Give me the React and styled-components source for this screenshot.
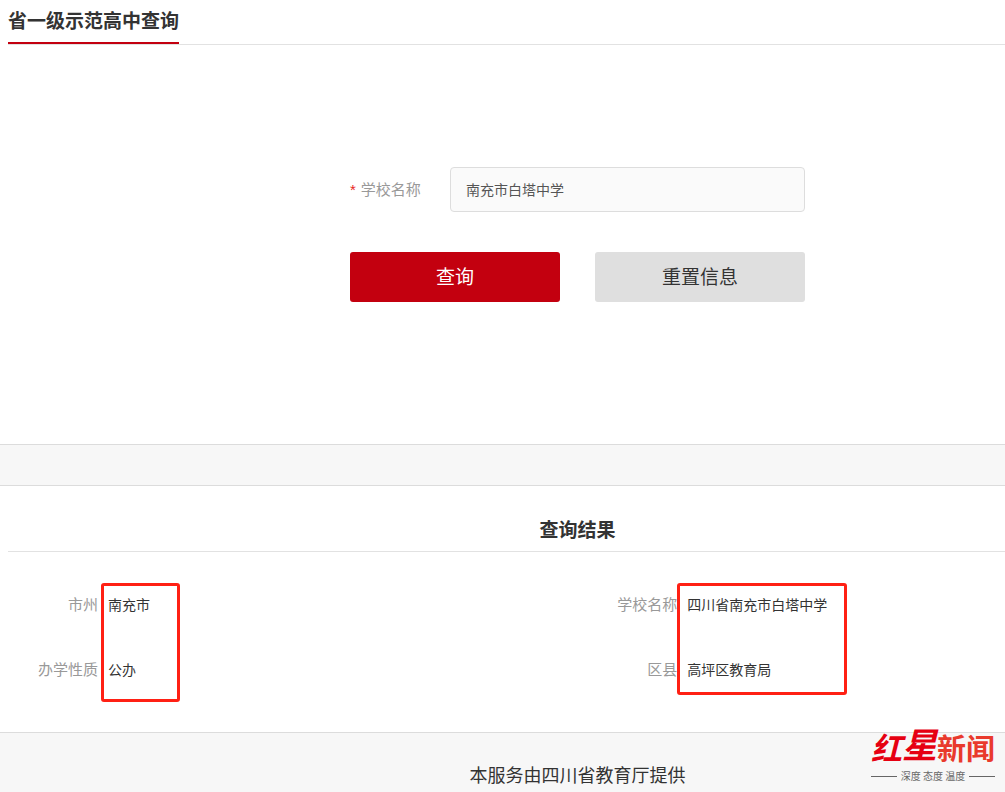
import React, { useState } from "react";
import styled, { createGlobalStyle } from "styled-components";

const GlobalStyle = createGlobalStyle`
  * { box-sizing: border-box; }
  body {
    margin: 0;
    background: #fff;
    color: #333;
    font-family: "Noto Sans CJK SC", sans-serif;
    font-size: 14px;
  }
  h1, h2, dl, dd, p { margin: 0; }
  button, input { font-family: inherit; }
`;

const Page = styled.div`
  display: flex;
  flex-direction: column;
  min-height: 100vh;
  overflow-x: hidden;
`;

const TitleBar = styled.header`
  display: flex;
  height: 45px;
  margin-left: 8px;
  border-bottom: 1px solid #e2e2e2;
`;

const Title = styled.h1`
  height: 44px;
  border-bottom: 2px solid #c3000f;
  font-size: 19px;
  line-height: 40px;
`;

const QueryForm = styled.form`
  display: flex;
  flex-direction: column;
  align-items: center;
  gap: 40px;
  padding: 122px 0 142px 150px;
`;

const FormRow = styled.div`
  display: flex;
  align-items: center;
  justify-content: space-between;
  width: 100%;
  max-width: 455px;
`;

const FieldLabel = styled.label`
  padding-bottom: 2px;
  color: #999;
  font-size: 15px;
`;

const Required = styled.span`
  margin-right: 5px;
  color: #e8261c;
  font-family: "Liberation Sans", sans-serif;
`;

const TextField = styled.input`
  width: 355px;
  height: 45px;
  padding: 0 15px 2px;
  border: 1px solid #ddd;
  border-radius: 4px;
  outline: none;
  background: #fafafa;
  color: #555;
  font-size: 14px;
`;

const Button = styled.button`
  width: 210px;
  height: 50px;
  padding: 0 0 3px;
  border: 0;
  border-radius: 3px;
  background: ${({ $primary }) => ($primary ? "#c3000f" : "#dfdfdf")};
  color: ${({ $primary }) => ($primary ? "#fff" : "#333")};
  font-size: 19px;
  cursor: pointer;
`;

const Divider = styled.div`
  height: 42px;
  border: solid #dcdcdc;
  border-width: 1px 0;
  background: #f7f7f7;
`;

const Results = styled.section`
  flex: 1;
  padding-left: 8px;
`;

const ResultsTitle = styled.h2`
  height: 66px;
  padding: 23px 0 0 142px;
  border-bottom: 1px solid #e2e2e2;
  font-size: 19px;
  line-height: 40px;
  text-align: center;
`;

const ResultColumns = styled.div`
  display: grid;
  grid-template-columns: 57fr 43fr;
  padding: 21px 0 29px;
`;

const ResultList = styled.dl`
  position: relative;
`;

const ResultRow = styled.div`
  display: grid;
  grid-template-columns: ${({ $labelWidth }) => $labelWidth}px 1fr;
  column-gap: 10px;
  height: 65px;
  line-height: 62px;
`;

const ResultLabel = styled.dt`
  color: #999;
  font-size: 15px;
  text-align: right;
`;

const ResultValue = styled.dd`
  font-size: 14px;
`;

const Highlight = styled.div`
  position: absolute;
  top: 10px;
  left: ${({ $left }) => $left}px;
  width: ${({ $width }) => $width}px;
  height: ${({ $height }) => $height}px;
  border: 3px solid #ff2014;
  border-radius: 3px;
  pointer-events: none;
`;

const Footer = styled.footer`
  position: relative;
  height: 60px;
  padding: 21px 0 0 150px;
  border-top: 1px solid #dcdcdc;
  background: #f7f7f7;
  font-size: 18px;
  line-height: 40px;
  text-align: center;
`;

const Watermark = styled.div`
  position: absolute;
  top: -9px;
  right: 10px;
  width: 124px;
`;

const Brand = styled.div`
  display: flex;
  align-items: center;
  justify-content: space-between;
  height: 45px;
  white-space: nowrap;
`;

const BrandScript = styled.span`
  display: flex;
  align-items: center;
  color: #e60012;
  font-size: 31px;
  font-style: italic;
  font-weight: 700;
`;

const BrandStar = styled.span`
  padding-bottom: 8px;
  font-size: 35px;
`;

const BrandName = styled.span`
  color: #e93a2c;
  font-size: 29px;
  font-weight: 700;
`;

const Tagline = styled.div`
  display: flex;
  align-items: center;
  gap: 4px;
  color: #666;
  font-size: 10px;
  line-height: 14px;
  white-space: nowrap;

  &::before,
  &::after {
    content: "";
    flex: 1;
    height: 1px;
    background: #666;
  }
`;

const resultGroups = [
  {
    labelWidth: 90,
    box: { left: 93, width: 79, height: 119 },
    rows: [["市州", "南充市"], ["办学性质", "公办"]],
  },
  {
    labelWidth: 101,
    box: { left: 101, width: 170, height: 112 },
    rows: [["学校名称", "四川省南充市白塔中学"], ["区县", "高坪区教育局"]],
  },
];

export default function App() {
  const [school, setSchool] = useState("南充市白塔中学");

  return (
    <Page>
      <GlobalStyle />
      <TitleBar>
        <Title>省一级示范高中查询</Title>
      </TitleBar>
      <QueryForm onSubmit={(e) => e.preventDefault()}>
        <FormRow>
          <FieldLabel htmlFor="school">
            <Required>*</Required>学校名称
          </FieldLabel>
          <TextField
            id="school"
            type="text"
            value={school}
            onChange={(e) => setSchool(e.target.value)}
          />
        </FormRow>
        <FormRow>
          <Button type="submit" $primary>查询</Button>
          <Button type="button" onClick={() => setSchool("")}>重置信息</Button>
        </FormRow>
      </QueryForm>
      <Divider />
      <Results>
        <ResultsTitle>查询结果</ResultsTitle>
        <ResultColumns>
          {resultGroups.map(({ labelWidth, box, rows }) => (
            <ResultList key={labelWidth}>
              {rows.map(([label, value]) => (
                <ResultRow key={label} $labelWidth={labelWidth}>
                  <ResultLabel>{label}</ResultLabel>
                  <ResultValue>{value}</ResultValue>
                </ResultRow>
              ))}
              <Highlight $left={box.left} $width={box.width} $height={box.height} />
            </ResultList>
          ))}
        </ResultColumns>
      </Results>
      <Footer>
        <p>本服务由四川省教育厅提供</p>
        <Watermark>
          <Brand>
            <BrandScript>红<BrandStar>星</BrandStar></BrandScript>
            <BrandName>新闻</BrandName>
          </Brand>
          <Tagline>深度 态度 温度</Tagline>
        </Watermark>
      </Footer>
    </Page>
  );
}
